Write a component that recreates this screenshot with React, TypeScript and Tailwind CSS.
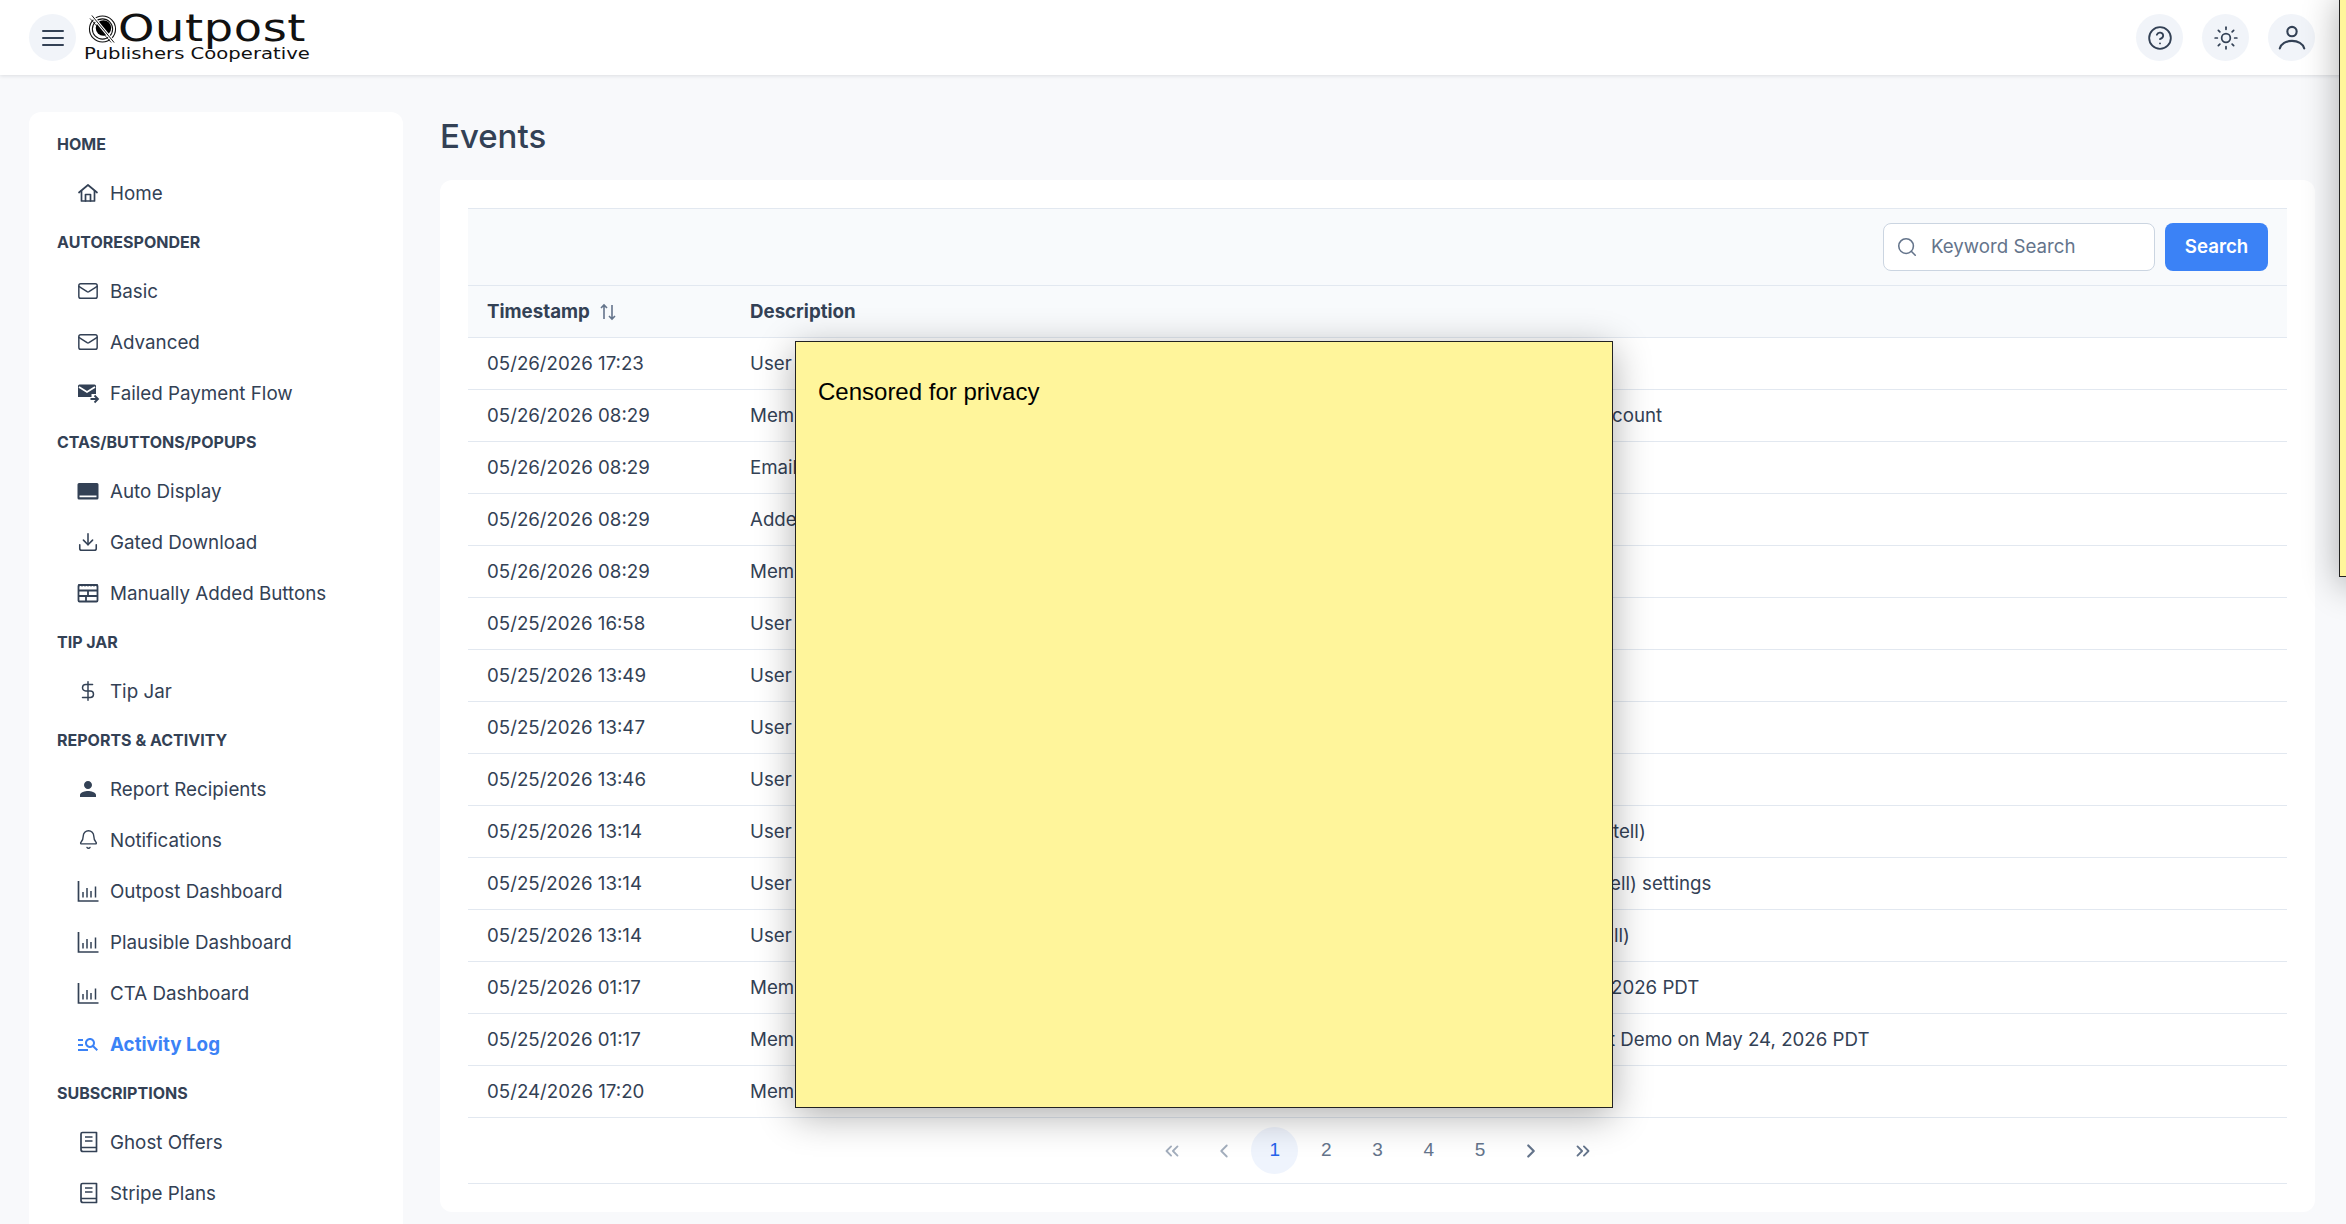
import { ChevronLeft, ChevronRight, ChevronsLeft, ChevronsRight, Search, Download, Bell, DollarSign, Mail, CircleHelp, Sun } from "lucide-react";
import { MdOutlineManageSearch, MdPerson } from "react-icons/md";
import type { ReactNode } from "react";

const svgBase = "h-[24px] w-[24px]";

const HomeIcon = () => (
  <svg viewBox="0 0 24 24" className={svgBase} fill="none" stroke="currentColor" strokeWidth="1.7" strokeLinejoin="round" strokeLinecap="round">
    <path d="M3 11.500 12 4l9 7.500" />
    <path d="M5.500 10v10h13V10" />
    <path d="M9.500 20v-6.500h5V20" />
  </svg>
);

const FailedMailIcon = () => (
  <svg viewBox="0 0 24 24" className={svgBase} fill="none">
    <path d="M3.500 3.500h15a1.500 1.500 0 0 1 1.500 1.500v8h-4.500v3H2V5a1.500 1.500 0 0 1 1.500-1.500Z" fill="currentColor" />
    <path d="m3 6 8 5 8-5" stroke="#fff" strokeWidth="1.800" />
    <path d="M14.500 18h7M18.500 14.500 22 18l-3.500 3.500" stroke="currentColor" strokeWidth="1.800" />
  </svg>
);

const DisplayIcon = () => (
  <svg viewBox="0 0 24 24" className={svgBase} fill="currentColor">
    <path d="M3 4h18a1.500 1.500 0 0 1 1.500 1.500V19a1.500 1.500 0 0 1-1.500 1.500H3A1.500 1.500 0 0 1 1.500 19V5.500A1.500 1.500 0 0 1 3 4Zm.5 12.500v1.700h17v-1.700Z" fillRule="evenodd" />
  </svg>
);

const TableIcon = () => (
  <svg viewBox="0 0 24 24" className={svgBase} fill="none" stroke="currentColor" strokeWidth="1.800">
    <rect x="2.500" y="4" width="19" height="16.500" rx="1" />
    <path d="M2.500 9.500h19M2.500 15h19M12 9.500V15M10 15v5.500" />
    <path d="M3 3v2.500M6 3v2.500M9 3v2.500M12 3v2.500M15 3v2.500M18 3v2.500M21 3v2.500" strokeWidth="1.200" />
  </svg>
);

const ChartIcon = () => (
  <svg viewBox="0 0 24 24" className={svgBase} fill="none" stroke="currentColor" strokeWidth="1.500">
    <path d="M2.500 2v20h20" strokeWidth="1.700" />
    <path d="M7 13v5.500M11 9v9.500M15 12v6.500M19.500 7.500v11" />
  </svg>
);

const BookIcon = () => (
  <svg viewBox="0 0 24 24" className={svgBase} fill="none" stroke="currentColor" strokeWidth="1.700" strokeLinejoin="round">
    <path d="M5 17.500V4a1.500 1.500 0 0 1 1.500-1.500h14V21.500H7A2 2 0 0 1 5 19.500Z" />
    <path d="M5 17.500h15.500M9 7h7.500M9 11h7.500" />
  </svg>
);

const UserIcon = () => (
  <svg viewBox="0 0 24 24" className="h-[28px] w-[28px]" fill="none" stroke="currentColor" strokeWidth="1.800" strokeLinecap="round">
    <circle cx="12" cy="6.500" r="4" />
    <path d="M1.500 21c1-4 5.500-6.500 10.500-6.500s9.500 2.500 10.500 6.500" />
  </svg>
);

const Logo = () => (
  <div className="ml-[8px] flex flex-col">
    <div className="flex h-[31px] items-center pl-[4px]">
      <svg viewBox="0 0 30 30" className="h-[30px] w-[29px] shrink-0" fill="none" stroke="#111">
        <circle cx="15" cy="15" r="13.500" strokeWidth="1.100" />
        <circle cx="15" cy="15" r="10.500" strokeWidth="1.100" />
        <circle cx="16" cy="14" r="8" fill="#000" stroke="none" />
        <path d="M4 1 27 29" stroke="#fff" strokeWidth="3" />
        <path d="M4 1 27 29" strokeWidth="1" />
        <path d="M2 4 24 29" strokeWidth="0.800" />
      </svg>
      <span className="ml-[1px] origin-left scale-x-[1.250] font-['DejaVu_Sans'] text-[37px] leading-[30px] tracking-[0.5px] text-[#111]">Outpost</span>
    </div>
    <span className="origin-left scale-x-[1.190] font-['DejaVu_Sans'] text-[16.500px] leading-[17px] whitespace-nowrap text-[#111]">Publishers Cooperative</span>
  </div>
);

const RoundBtn = ({ children, className = "" }: { children: ReactNode; className?: string }) => (
  <button className={`flex h-[47px] w-[47px] items-center justify-center rounded-full bg-[#f1f4f9] text-[#334155] ${className}`}>{children}</button>
);

type NavItem = { label: string; icon: ReactNode; active?: boolean };

const nav: { title: string; items: NavItem[] }[] = [
  { title: "HOME", items: [{ label: "Home", icon: <HomeIcon /> }] },
  {
    title: "AUTORESPONDER",
    items: [
      { label: "Basic", icon: <Mail size={22} strokeWidth={1.6} /> },
      { label: "Advanced", icon: <Mail size={22} strokeWidth={1.6} /> },
      { label: "Failed Payment Flow", icon: <FailedMailIcon /> },
    ],
  },
  {
    title: "CTAS/BUTTONS/POPUPS",
    items: [
      { label: "Auto Display", icon: <DisplayIcon /> },
      { label: "Gated Download", icon: <Download size={22} strokeWidth={1.7} /> },
      { label: "Manually Added Buttons", icon: <TableIcon /> },
    ],
  },
  { title: "TIP JAR", items: [{ label: "Tip Jar", icon: <DollarSign size={22} strokeWidth={1.6} /> }] },
  {
    title: "REPORTS & ACTIVITY",
    items: [
      { label: "Report Recipients", icon: <MdPerson size={24} /> },
      { label: "Notifications", icon: <Bell size={21} strokeWidth={1.6} /> },
      { label: "Outpost Dashboard", icon: <ChartIcon /> },
      { label: "Plausible Dashboard", icon: <ChartIcon /> },
      { label: "CTA Dashboard", icon: <ChartIcon /> },
      { label: "Activity Log", icon: <MdOutlineManageSearch size={24} />, active: true },
    ],
  },
  {
    title: "SUBSCRIPTIONS",
    items: [
      { label: "Ghost Offers", icon: <BookIcon /> },
      { label: "Stripe Plans", icon: <BookIcon /> },
    ],
  },
];

const rows = [
  { time: "05/26/2026 17:23", head: "User" },
  { time: "05/26/2026 08:29", head: "Member", tail: "count", tailClass: "ml-[0px]" },
  { time: "05/26/2026 08:29", head: "Email" },
  { time: "05/26/2026 08:29", head: "Added" },
  { time: "05/26/2026 08:29", head: "Member" },
  { time: "05/25/2026 16:58", head: "User" },
  { time: "05/25/2026 13:49", head: "User" },
  { time: "05/25/2026 13:47", head: "User" },
  { time: "05/25/2026 13:46", head: "User" },
  { time: "05/25/2026 13:14", head: "User", tail: "tell)", tailClass: "ml-[1px]" },
  { time: "05/25/2026 13:14", head: "User", tail: "ell) settings", tailClass: "-ml-[2px]" },
  { time: "05/25/2026 13:14", head: "User", tail: "ll)", tailClass: "ml-[2px]" },
  { time: "05/25/2026 01:17", head: "Member", tail: "2026 PDT", tailClass: "-ml-[1px]" },
  { time: "05/25/2026 01:17", head: "Member", tail: "t Demo on May 24, 2026 PDT", tailClass: "-ml-[3px]" },
  { time: "05/24/2026 17:20", head: "Member" },
];

const Sidebar = () => (
  <aside className="mt-[37px] ml-[29px] h-[1200px] w-[374px] shrink-0 rounded-t-xl bg-white pt-[8px]">
    {nav.map((section) => (
      <div key={section.title}>
        <div className="flex h-[47px] items-center pl-[28px] text-[16px] font-bold text-[#334155]">{section.title}</div>
        {section.items.map((item) => (
          <div key={item.label} className={`flex h-[51px] items-center gap-[10px] pl-[47px] text-[18.800px] ${item.active ? "font-bold text-[#3b82f6]" : "text-[#334155]"}`}>
            <span className="flex w-[24px] justify-center">{item.icon}</span>
            <span className="pt-[3px]">{item.label}</span>
          </div>
        ))}
      </div>
    ))}
  </aside>
);

const Pagination = () => (
  <div className="flex h-[66px] items-center justify-center gap-[4.300px] border-b-[1.500px] border-[#e2e8f0] font-['Liberation_Sans'] text-[19px] text-[#64748b]">
    <button className="flex h-[47px] w-[47px] items-center justify-center text-[#a3aebd]"><ChevronsLeft size={22} strokeWidth={2} /></button>
    <button className="flex h-[47px] w-[47px] items-center justify-center text-[#a3aebd]"><ChevronLeft size={22} strokeWidth={2} /></button>
    <button className="h-[47px] w-[47px] rounded-full bg-[#eff4fd] text-[#2563eb]">1</button>
    <button className="h-[47px] w-[47px]">2</button>
    <button className="h-[47px] w-[47px]">3</button>
    <button className="h-[47px] w-[47px]">4</button>
    <button className="h-[47px] w-[47px]">5</button>
    <button className="flex h-[47px] w-[47px] items-center justify-center"><ChevronRight size={22} strokeWidth={2.400} /></button>
    <button className="flex h-[47px] w-[47px] items-center justify-center"><ChevronsRight size={22} strokeWidth={2} /></button>
  </div>
);

const EventsTable = () => (
  <div className="text-[18.700px] text-[#334155]">
    <div className="flex h-[78px] items-center justify-end gap-[10px] border-y-[1.500px] border-[#e2e8f0] bg-[#f8fafc] pr-[19px]">
      <div className="flex h-[48px] w-[272px] items-center gap-[13px] rounded-lg border-[1.500px] border-[#cbd5e1] bg-white pl-[12px]">
        <Search size={22} strokeWidth={1.700} className="shrink-0 text-[#64748b]" />
        <input placeholder="Keyword Search" className="w-[200px] outline-none placeholder:text-[#64748b]" />
      </div>
      <button className="h-[48px] w-[103px] rounded-lg bg-[#3b82f6] font-semibold text-white">Search</button>
    </div>
    <div className="flex h-[52px] items-center border-b-[1.500px] border-[#e2e8f0] bg-[#f8fafc] pt-[2px] pl-[19px] font-bold">
      <div className="flex w-[263px] items-center gap-[9px]">
        Timestamp
        <svg viewBox="0 0 18 18" className="h-[18px] w-[18px] text-[#64748b]" fill="none" stroke="currentColor" strokeWidth="1.600">
          <path d="M5 16V2M2 5l3-3 3 3M13 2v14M10 13l3 3 3-3" />
        </svg>
      </div>
      <div>Description</div>
    </div>
    {rows.map((row, i) => (
      <div key={i} className="flex h-[52px] items-center border-b-[1.500px] border-[#e2e8f0] pt-[2px] pl-[19px]">
        <div className="w-[263px]">{row.time}</div>
        <div className="w-[862px] whitespace-nowrap">{row.head}</div>
        {row.tail && <div className={`whitespace-nowrap ${row.tailClass}`}>{row.tail}</div>}
      </div>
    ))}
    <Pagination />
  </div>
);

export default function App() {
  return (
    <div className="relative h-[1224px] w-[2346px] overflow-hidden bg-[#f8f9fb] font-['Inter',sans-serif]">
      <header className="relative z-10 flex h-[75px] items-center justify-between bg-white pr-[31px] pl-[29px] shadow-[0_1px_4px_rgba(15,23,42,0.12)]">
        <div className="flex items-center">
          <RoundBtn>
            <svg viewBox="0 0 24 24" className="h-[24px] w-[24px]" stroke="currentColor" strokeWidth="2" strokeLinecap="round">
              <path d="M2 5h20M2 12h20M2 19h20" />
            </svg>
          </RoundBtn>
          <Logo />
        </div>
        <div className="flex items-center gap-[19px]">
          <RoundBtn><CircleHelp size={26} strokeWidth={1.700} /></RoundBtn>
          <RoundBtn><Sun size={26} strokeWidth={1.600} /></RoundBtn>
          <RoundBtn><UserIcon /></RoundBtn>
        </div>
      </header>

      <div className="flex">
        <Sidebar />
        <main className="ml-[37px] w-[1875px]">
          <h1 className="mt-[38px] mb-[20px] h-[47px] text-[33px] leading-[47px] font-medium text-[#334155]">Events</h1>
          <section className="rounded-xl bg-white px-[28px] pt-[28px] pb-[28px]">
            <EventsTable />
          </section>
        </main>
      </div>

      {/* privacy notes laid over the page */}
      <div className="absolute top-[341px] left-[795px] z-20 h-[767px] w-[818px] border-[1.500px] border-[#222] bg-[#fff59b] px-[22px] py-[34px] font-['Liberation_Sans'] text-[24px] leading-[32px] text-black shadow-[0_8px_36px_rgba(0,0,0,0.32)]">
        Censored for privacy
      </div>
      <div className="absolute top-[-10px] left-[2339px] z-20 h-[587px] w-[40px] border-[1.500px] border-[#222] bg-[#fff59b] shadow-[0_8px_36px_rgba(0,0,0,0.32)]" />
    </div>
  );
}
